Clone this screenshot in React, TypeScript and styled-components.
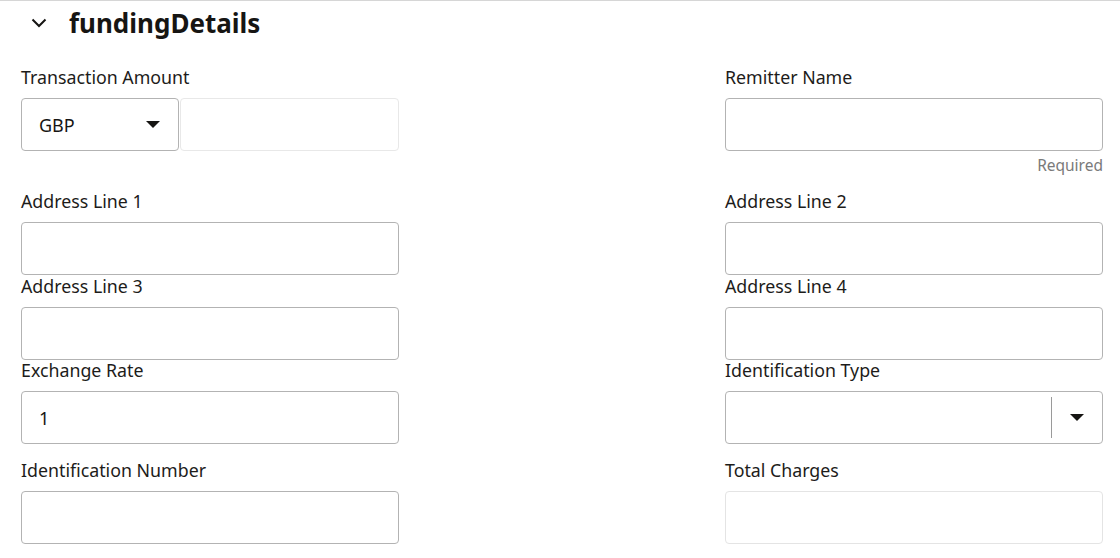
import React from "react";
import styled, { createGlobalStyle } from "styled-components";

const Global = createGlobalStyle`
  html, body { margin: 0; padding: 0; background: #ffffff; }
  body { font-family: "Noto Sans", "Open Sans", sans-serif; color: #161513; }
  * { box-sizing: border-box; }
`;

const Section = styled.section`
  border-top: 1px solid #d6d6d6;
  width: 1120px;
  height: 558px;
  overflow: hidden;
`;

const Header = styled.div`
  display: flex;
  align-items: center;
  height: 43px;
  padding-left: 31px;
  gap: 22px;
`;

const Title = styled.h2`
  margin: 0;
  font-size: 26px;
  line-height: 30px;
  font-weight: 700;
  color: #161513;
`;

const Grid = styled.div`
  display: grid;
  grid-template-columns: 378px 378px;
  justify-content: space-between;
  padding: 0 17px 0 21px;
  margin-top: 23px;
`;

const Field = styled.div<{ $after: number }>`
  display: flex;
  flex-direction: column;
  padding-bottom: ${(p) => p.$after}px;
`;

const Label = styled.label`
  font-size: 17.8px;
  line-height: 20px;
  height: 20px;
  color: #1d1c1a;
  margin-bottom: 11px;
`;

const Box = styled.div<{ $readonly?: boolean }>`
  height: 53px;
  border: 1px solid ${(p) => (p.$readonly ? "#e4e4e4" : "#b3b3b3")};
  border-radius: 4px;
  background: #fff;
  display: flex;
  align-items: center;
  padding: 0 16px 0 17px;
  font-size: 18px;
  color: #161513;
`;

const Split = styled.div`
  display: flex;
  height: 53px;
`;

const Currency = styled(Box)`
  width: 158px;
  flex: none;
  justify-content: space-between;
  padding: 0 18px 0 17px;
`;

const Amount = styled(Box)`
  flex: 1;
  margin-left: 1px;
  border-color: #e8e8e8;
`;

const SelectBox = styled(Box)`
  padding: 0;
`;

const SelectValue = styled.div`
  flex: 1;
`;

const Divider = styled.div`
  width: 1px;
  height: 41px;
  background: #9a9a9a;
`;

const CaretCell = styled.div`
  width: 50px;
  display: flex;
  justify-content: center;
  align-items: center;
`;

const Helper = styled.div`
  text-align: right;
  font-size: 15.5px;
  line-height: 20px;
  color: #7a7a7a;
  margin-top: 4px;
`;

const Caret = () => (
  <svg width="14" height="8" viewBox="0 0 14 8">
    <path d="M0 0 L14 0 L7 7 Z" fill="#161513" />
  </svg>
);

const Chevron = () => (
  <svg width="16" height="10" viewBox="0 0 16 10">
    <path d="M1.5 1.5 L8 8 L14.5 1.5" fill="none" stroke="#161513" strokeWidth="2" />
  </svg>
);

export default function App() {
  return (
    <>
      <Global />
      <Section>
        <Header>
          <Chevron />
          <Title>fundingDetails</Title>
        </Header>
        <Grid>
          <Field $after={0}>
            <Label>Transaction Amount</Label>
            <Split>
              <Currency>
                <span>GBP</span>
                <Caret />
              </Currency>
              <Amount />
            </Split>
          </Field>
          <Field $after={16}>
            <Label>Remitter Name</Label>
            <Box />
            <Helper>Required</Helper>
          </Field>

          <Field $after={0.5}>
            <Label>Address Line 1</Label>
            <Box />
          </Field>
          <Field $after={0.5}>
            <Label>Address Line 2</Label>
            <Box />
          </Field>

          <Field $after={0.5}>
            <Label>Address Line 3</Label>
            <Box />
          </Field>
          <Field $after={0.5}>
            <Label>Address Line 4</Label>
            <Box />
          </Field>

          <Field $after={16}>
            <Label>Exchange Rate</Label>
            <Box>1</Box>
          </Field>
          <Field $after={16}>
            <Label>Identification Type</Label>
            <SelectBox>
              <SelectValue />
              <Divider />
              <CaretCell>
                <Caret />
              </CaretCell>
            </SelectBox>
          </Field>

          <Field $after={0}>
            <Label>Identification Number</Label>
            <Box />
          </Field>
          <Field $after={0}>
            <Label>Total Charges</Label>
            <Box $readonly />
          </Field>
        </Grid>
      </Section>
    </>
  );
}
